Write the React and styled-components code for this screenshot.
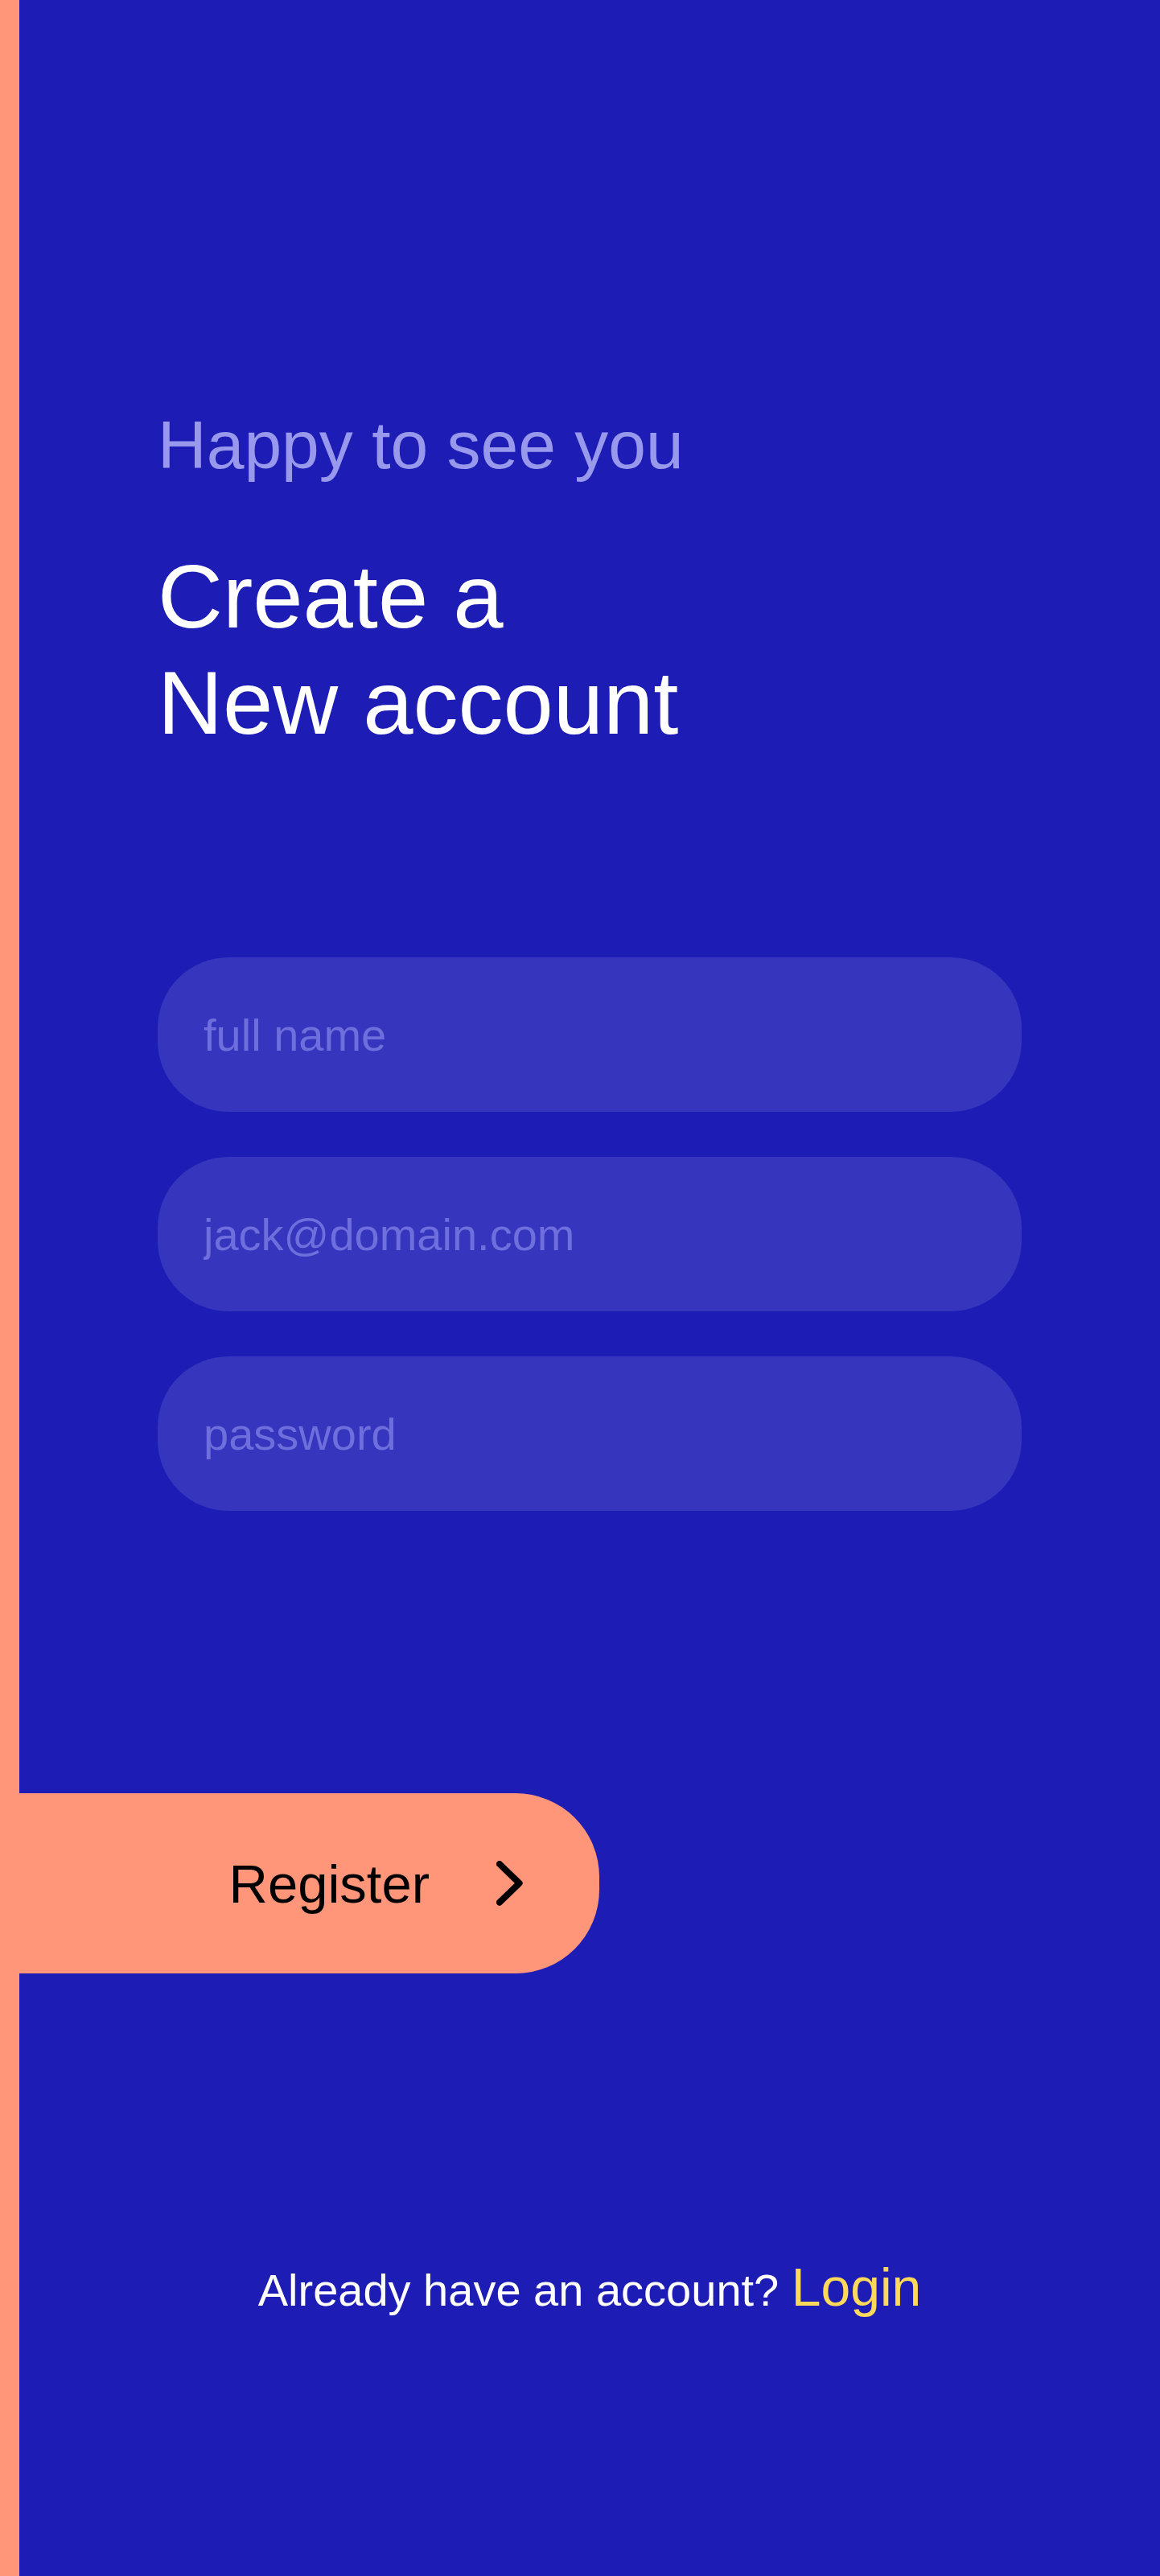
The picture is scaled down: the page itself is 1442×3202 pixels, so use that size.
import React from "react";
import styled, { createGlobalStyle } from "styled-components";

const GlobalStyle = createGlobalStyle`
  html, body {
    margin: 0;
    padding: 0;
    background: #1d1db5;
  }
  * {
    box-sizing: border-box;
  }
`;

const Page = styled.main`
  min-height: 100vh;
  background: #1d1db5;
  border-left: 24px solid #ff967a;
  padding-top: 505px;
  font-family: "Liberation Sans", Arial, sans-serif;
`;

const Header = styled.header`
  padding: 0 172px;
`;

const Greeting = styled.p`
  margin: 0;
  font-size: 84px;
  line-height: 96px;
  color: #9898ec;
`;

const Title = styled.h1`
  margin: 75px 0 0;
  font-size: 112px;
  line-height: 132px;
  font-weight: 400;
  color: #ffffff;
`;

const Form = styled.form`
  margin-top: 250px;
  padding: 0 172px;
  display: flex;
  flex-direction: column;
  gap: 56px;
`;

const Field = styled.input`
  width: 100%;
  height: 192px;
  border: none;
  outline: none;
  border-radius: 88px;
  background: #3535be;
  padding: 0 0 0 57px;
  font-family: "Liberation Sans", Arial, sans-serif;
  font-size: 56px;
  color: #ffffff;

  &::placeholder {
    color: #6e6edc;
  }
`;

const RegisterButton = styled.button`
  margin-top: 351px;
  width: 721px;
  height: 224px;
  border: none;
  border-radius: 0 104px 104px 0;
  background: #ff967a;
  display: flex;
  align-items: center;
  justify-content: flex-end;
  gap: 83px;
  padding: 0 95px 0 0;
  font-family: "Liberation Sans", Arial, sans-serif;
  font-size: 67px;
  color: #000000;
  cursor: pointer;

  svg {
    display: block;
  }
`;

const Footer = styled.p`
  margin: 353px 0 0;
  text-align: center;
  font-size: 56px;
  line-height: 75px;
  color: #ffffff;
`;

const LoginLink = styled.a`
  font-size: 66px;
  color: #ffd95a;
  text-decoration: none;
`;

function Chevron() {
  return (
    <svg width="33" height="56" viewBox="0 0 33 56" fill="none">
      <polyline
        points="4,4 28.6,27.8 4,51.7"
        stroke="#000"
        strokeWidth="8"
        strokeLinecap="round"
        strokeLinejoin="round"
      />
    </svg>
  );
}

export default function App() {
  return (
    <>
      <GlobalStyle />
      <Page>
        <Header>
          <Greeting>Happy to see you</Greeting>
          <Title>
            Create a
            <br />
            New account
          </Title>
        </Header>
        <Form onSubmit={(e) => e.preventDefault()}>
          <Field type="text" placeholder="full name" />
          <Field type="email" placeholder="jack@domain.com" />
          <Field type="password" placeholder="password" />
        </Form>
        <RegisterButton type="button">
          <span>Register</span>
          <Chevron />
        </RegisterButton>
        <Footer>
          Already have an account? <LoginLink href="#">Login</LoginLink>
        </Footer>
      </Page>
    </>
  );
}
